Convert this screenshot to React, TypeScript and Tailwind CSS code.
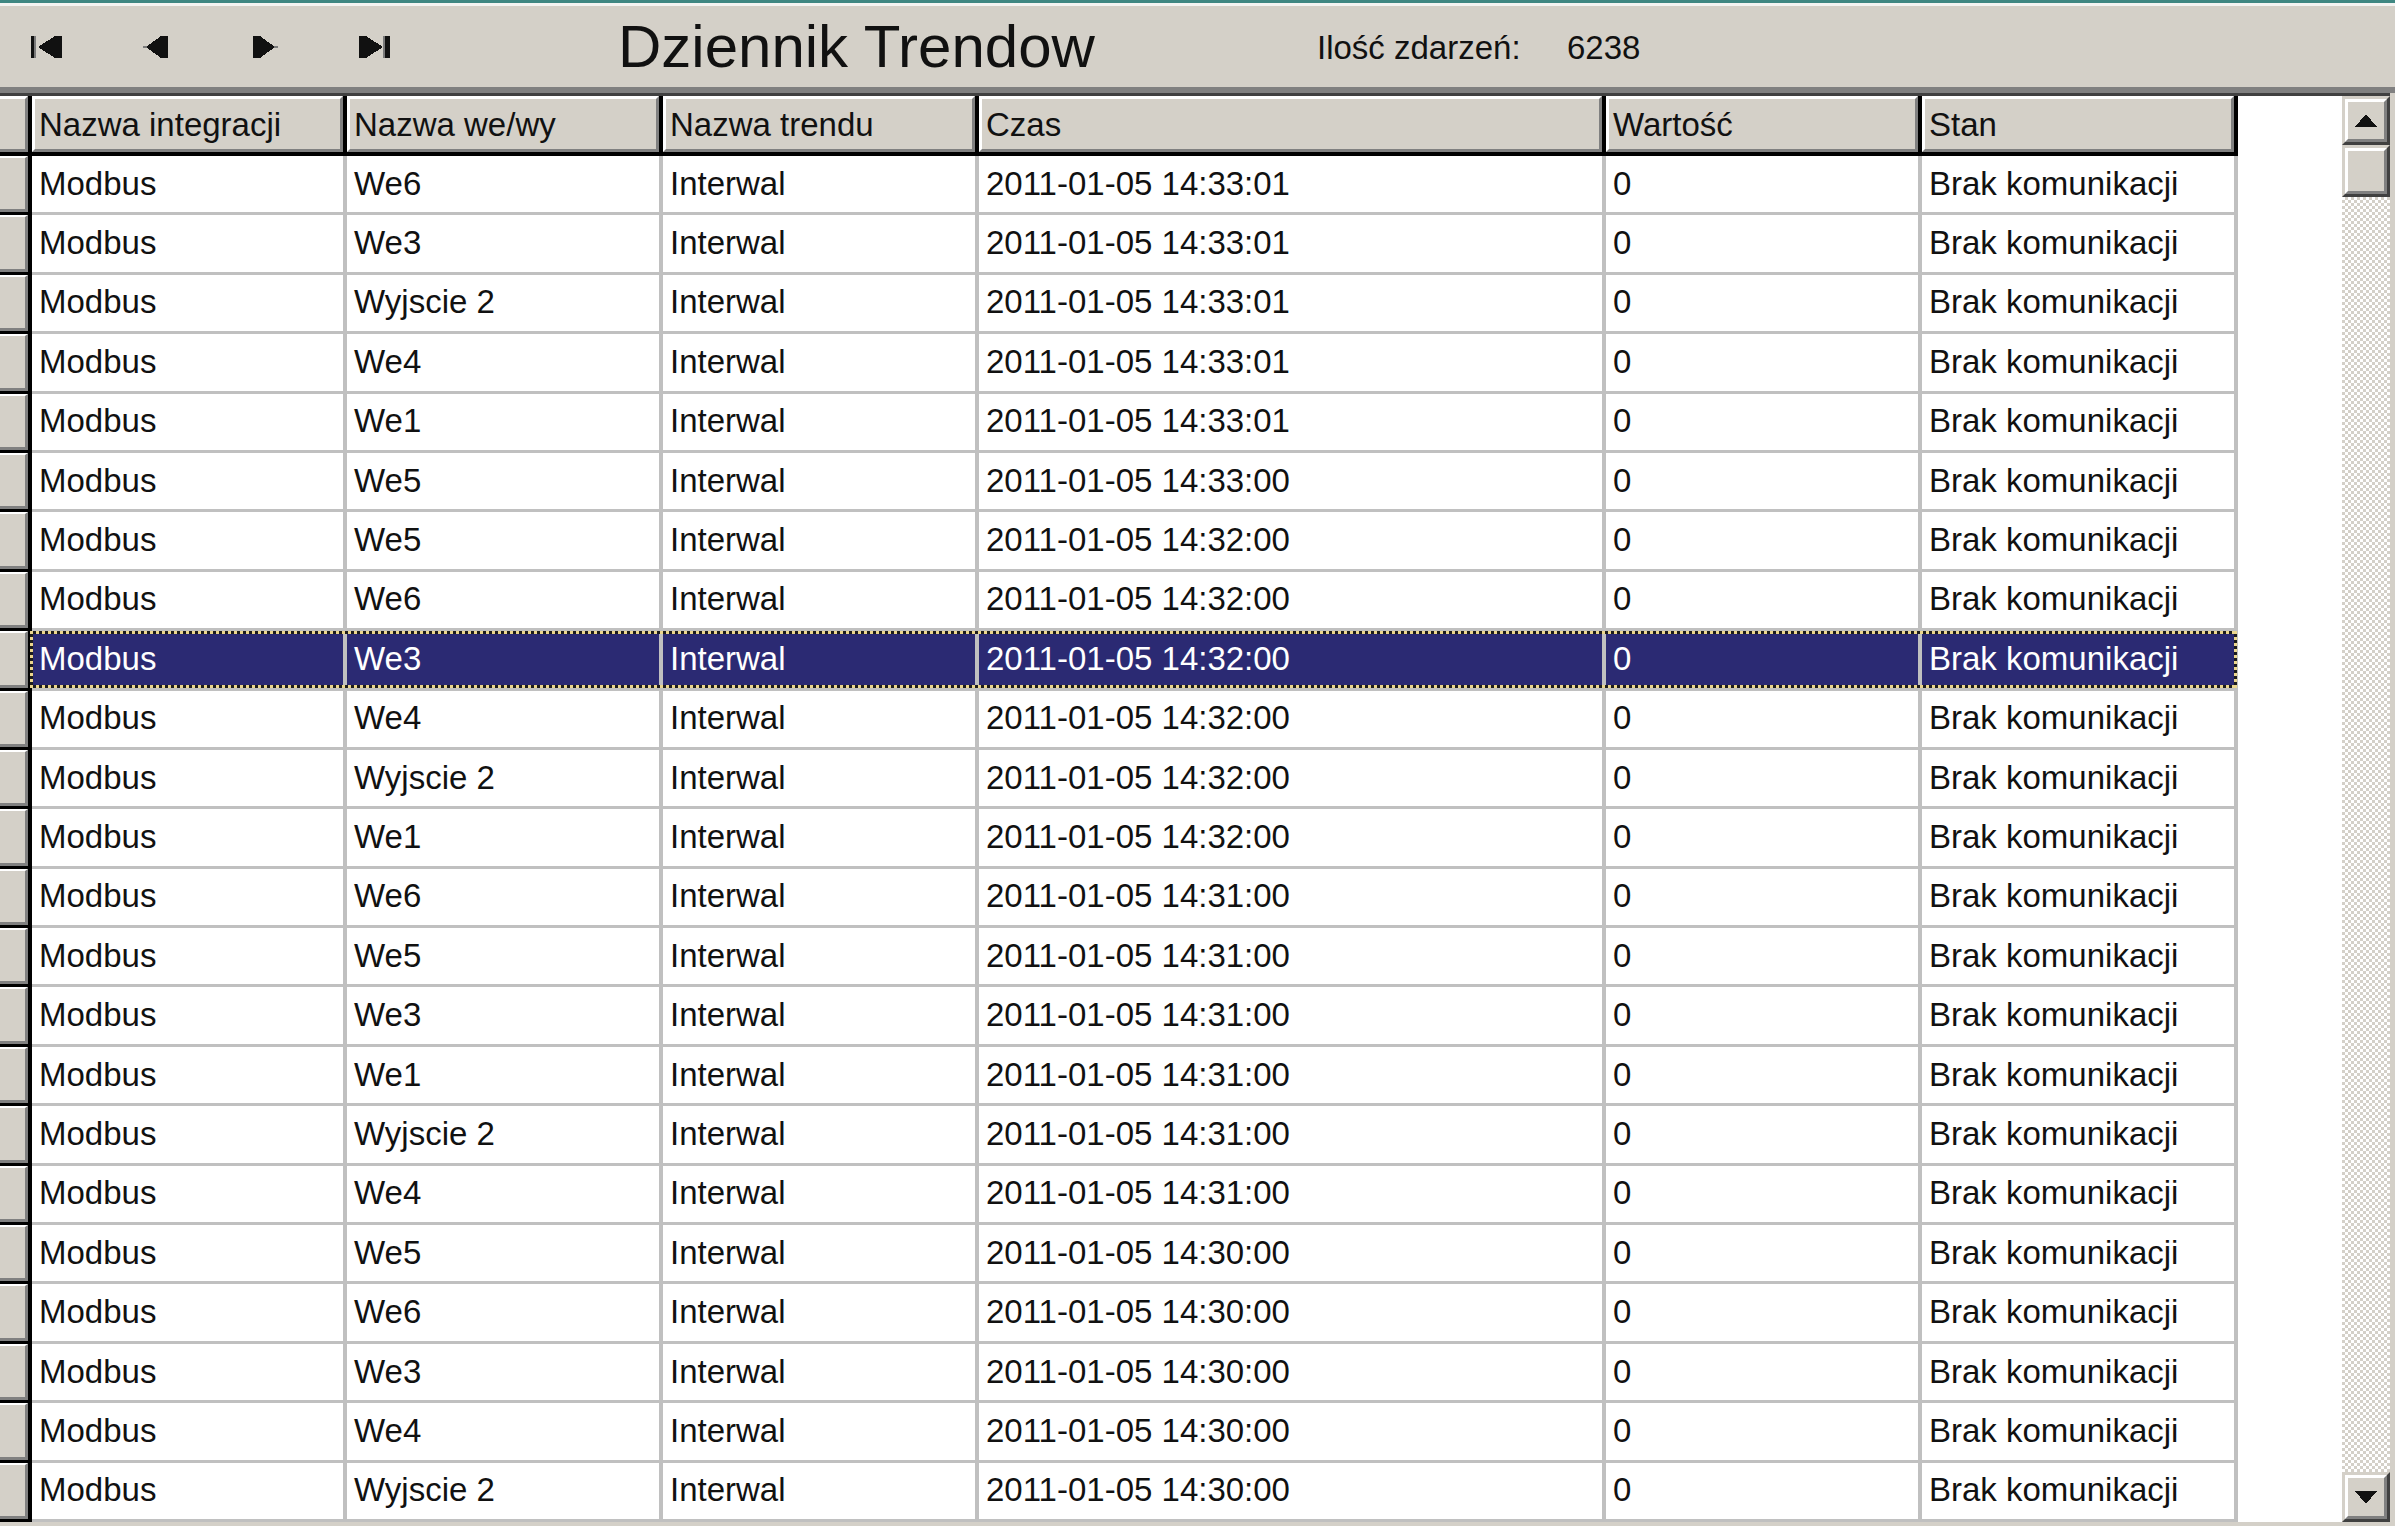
const colW = ["w-[315px]", "w-[316px]", "w-[316px]", "w-[627px]", "w-[316px]", "w-[316px]"];

const headers = ["Nazwa integracji", "Nazwa we/wy", "Nazwa trendu", "Czas", "Wartość", "Stan"];

const rows: [string, string][] = [
  ["We6", "14:33:01"],
  ["We3", "14:33:01"],
  ["Wyjscie 2", "14:33:01"],
  ["We4", "14:33:01"],
  ["We1", "14:33:01"],
  ["We5", "14:33:00"],
  ["We5", "14:32:00"],
  ["We6", "14:32:00"],
  ["We3", "14:32:00"],
  ["We4", "14:32:00"],
  ["Wyjscie 2", "14:32:00"],
  ["We1", "14:32:00"],
  ["We6", "14:31:00"],
  ["We5", "14:31:00"],
  ["We3", "14:31:00"],
  ["We1", "14:31:00"],
  ["Wyjscie 2", "14:31:00"],
  ["We4", "14:31:00"],
  ["We5", "14:30:00"],
  ["We6", "14:30:00"],
  ["We3", "14:30:00"],
  ["We4", "14:30:00"],
  ["Wyjscie 2", "14:30:00"],
];

const SELECTED = 8;

function NavIcon({ kind }: { kind: "first" | "prev" | "next" | "last" }) {
  if (kind === "first")
    return (
      <svg width="31" height="22" viewBox="0 0 31 22" shapeRendering="crispEdges">
        <rect x="0" y="0" width="3" height="22" fill="#111" />
        <rect x="3" y="0" width="2" height="22" fill="#7a7a7a" />
        <polygon points="7,11 24,0 31,0 31,22 24,22" fill="#111" />
      </svg>
    );
  if (kind === "prev")
    return (
      <svg width="25" height="22" viewBox="0 0 25 22" shapeRendering="crispEdges">
        <rect x="0" y="10" width="4" height="2" fill="#7a7a7a" />
        <polygon points="3,11 18,0 25,0 25,22 18,22" fill="#111" />
      </svg>
    );
  if (kind === "next")
    return (
      <svg width="25" height="22" viewBox="0 0 25 22" shapeRendering="crispEdges">
        <rect x="21" y="10" width="4" height="2" fill="#7a7a7a" />
        <polygon points="0,0 7,0 22,11 7,22 0,22" fill="#111" />
      </svg>
    );
  return (
    <svg width="31" height="22" viewBox="0 0 31 22" shapeRendering="crispEdges">
      <polygon points="0,0 7,0 24,11 7,22 0,22" fill="#111" />
      <rect x="24" y="0" width="2" height="22" fill="#7a7a7a" />
      <rect x="26" y="0" width="5" height="22" fill="#111" />
    </svg>
  );
}

function Raised({ className, children }: { className: string; children?: React.ReactNode }) {
  return (
    <div
      className={`border-t-[3px] border-l-[3px] border-t-[#d4d0c8] border-l-[#d4d0c8] border-r-[3px] border-b-[3px] border-r-[#404040] border-b-[#404040] ${className}`}
    >
      <div className="flex h-full items-center justify-center border-t-[3px] border-l-[3px] border-t-white border-l-white border-r-[3px] border-b-[3px] border-r-[#808080] border-b-[#808080] bg-[#d4d0c8]">
        {children}
      </div>
    </div>
  );
}

function HeaderRow() {
  return (
    <div className="flex h-[60px] bg-white">
      <div className="h-full w-[32px] border-r-4 border-b-4 border-black">
        <div className="h-full border-t-[3px] border-white border-r-[3px] border-b-[3px] border-r-[#808080] border-b-[#808080] bg-[#d4d0c8]" />
      </div>
      {headers.map((h, i) => (
        <div key={h} className={`h-full border-r-4 border-b-4 border-black ${colW[i]}`}>
          <div className="flex h-full items-center border-t-[3px] border-l-[3px] border-t-white border-l-white border-r-[3px] border-b-[3px] border-r-[#808080] border-b-[#808080] bg-[#d4d0c8] pl-[4px] text-[33px] leading-none text-[#111]">
            {h}
          </div>
        </div>
      ))}
    </div>
  );
}

function DataRow({ io, time, selected }: { io: string; time: string; selected: boolean }) {
  const values = ["Modbus", io, "Interwal", `2011-01-05 ${time}`, "0", "Brak komunikacji"];
  return (
    <div className="flex h-[59.4px]">
      <div className="h-full w-[32px] border-r-4 border-b-[3px] border-black">
        <div className="h-full border-t-2 border-white border-r-[3px] border-b-[3px] border-r-[#808080] border-b-[#808080] bg-[#d4d0c8]" />
      </div>
      <div className="relative flex h-full">
        {values.map((v, i) => (
          <div
            key={i}
            className={`flex h-full items-center border-r-4 border-b-[3px] border-[#c0c0c0] pl-[7px] pb-[2px] text-[33px] leading-none ${colW[i]} ${
              selected ? "bg-[#2b2a73] text-white" : "bg-white text-[#111]"
            }`}
          >
            {v}
          </div>
        ))}
        {selected && (
          <>
            <div className="absolute left-[-2px] right-[1px] top-0 h-[3px] bg-[repeating-linear-gradient(90deg,#ecd68e_0_3px,#1c1c1c_3px_6px)]" />
            <div className="absolute left-[-2px] right-[1px] bottom-[3px] h-[3px] bg-[repeating-linear-gradient(90deg,#ecd68e_0_3px,#1c1c1c_3px_6px)]" />
            <div className="absolute left-[-2px] top-0 bottom-[3px] w-[3px] bg-[repeating-linear-gradient(180deg,#ecd68e_0_3px,#1c1c1c_3px_6px)]" />
            <div className="absolute right-[1px] top-0 bottom-[3px] w-[3px] bg-[repeating-linear-gradient(180deg,#ecd68e_0_3px,#1c1c1c_3px_6px)]" />
          </>
        )}
      </div>
    </div>
  );
}

export default function App() {
  return (
    <div className="flex h-[1526px] w-[2395px] flex-col overflow-hidden bg-[#d4d0c8] font-['Liberation_Sans',Arial,sans-serif]">
      <div className="h-[3px] bg-[#3f8782]" />
      <div className="h-[3px] bg-[#f4f4f2]" />
      <div className="flex h-[81px] items-center pl-[31px] text-[#111]">
        <NavIcon kind="first" />
        <div className="ml-[81px]">
          <NavIcon kind="prev" />
        </div>
        <div className="ml-[85px]">
          <NavIcon kind="next" />
        </div>
        <div className="ml-[81px]">
          <NavIcon kind="last" />
        </div>
        <div className="ml-[228px] w-[699px] text-[60px] leading-none">Dziennik Trendow</div>
        <div className="w-[250px] pt-[2px] text-[33px] leading-none">Ilość zdarzeń:</div>
        <div className="pt-[2px] text-[33px] leading-none">6238</div>
      </div>
      <div className="h-[6px] bg-[#808080]" />
      <div className="h-[3px] w-[2390px] bg-[#404040]" />
      <div className="flex h-[1426px]">
        <div className="flex w-[2238px] flex-col bg-white">
          <HeaderRow />
          {rows.map(([io, time], i) => (
            <DataRow key={i} io={io} time={time} selected={i === SELECTED} />
          ))}
        </div>
        <div className="w-[104px] bg-white" />
        <div className="flex w-[48px] flex-col">
          <Raised className="h-[49px]">
            <svg width="22" height="13" viewBox="0 0 22 13" shapeRendering="crispEdges">
              <polygon points="11,0 22,13 0,13" fill="#111" />
            </svg>
          </Raised>
          <Raised className="h-[52px]" />
          <div className="flex-1 bg-[repeating-conic-gradient(#d4d0c8_0%_25%,#ffffff_0%_50%)] bg-[length:6px_6px]" />
          <Raised className="h-[50px]">
            <svg width="22" height="13" viewBox="0 0 22 13" shapeRendering="crispEdges">
              <polygon points="0,0 22,0 11,13" fill="#111" />
            </svg>
          </Raised>
        </div>
        <div className="w-[5px] bg-[#d4d0c8]" />
      </div>
      <div className="h-[4px] bg-[#d4d0c8]" />
    </div>
  );
}
